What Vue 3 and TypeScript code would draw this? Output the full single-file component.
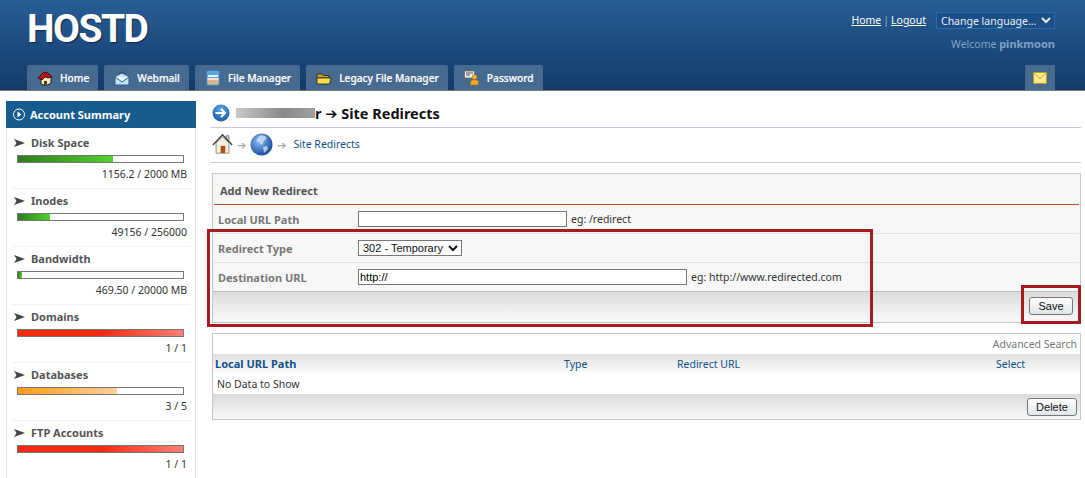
<script setup lang="ts">
interface Stat { name: string; pct: number; value: string; kind: string }
const stats: Stat[] = [
  { name: 'Disk Space', pct: 57.8, value: '1156.2 / 2000 MB', kind: 'green' },
  { name: 'Inodes', pct: 19.2, value: '49156 / 256000', kind: 'green' },
  { name: 'Bandwidth', pct: 2.3, value: '469.50 / 20000 MB', kind: 'green' },
  { name: 'Domains', pct: 100, value: '1 / 1', kind: 'red' },
  { name: 'Databases', pct: 60, value: '3 / 5', kind: 'orange' },
  { name: 'FTP Accounts', pct: 100, value: '1 / 1', kind: 'red' },
]
const tabs = [
  { name: 'Home', icon: 'home' },
  { name: 'Webmail', icon: 'mail' },
  { name: 'File Manager', icon: 'files' },
  { name: 'Legacy File Manager', icon: 'folder' },
  { name: 'Password', icon: 'pass' },
]
</script>

<template>
  <div class="page">
    <header class="top">
      <div class="logo">HOSTD</div>
      <div class="account">
        <div class="links">
          <a>Home</a><span class="sep">|</span><a>Logout</a>
          <select class="lang"><option>Change language...</option></select>
        </div>
        <div class="welcome">Welcome <b>pinkmoon</b></div>
      </div>
      <nav class="tabs">
        <a v-for="t in tabs" :key="t.name" class="tab">
          <svg class="tabicon" viewBox="0 0 16 16">
            <template v-if="t.icon === 'home'">
              <path d="M4 8v6l5 2 5-3V7L9 4z" fill="#f2e9c4" stroke="#222" stroke-width="1"/>
              <path d="M1 8l6-6 4 1 4 4-4 1-3-1-3 3z" fill="#b3151c" stroke="#300" stroke-width=".8"/>
              <path d="M7 11h3v4H7z" fill="#5a3a12"/>
            </template>
            <template v-else-if="t.icon === 'mail'">
              <path d="M5 6V3.2Q8 .8 11 3.2V6" fill="none" stroke="#445" stroke-width="1"/>
              <path d="M1 6.5L8 3l7 3.500V15H1z" fill="#bfe3f7" stroke="#2c5f88"/>
              <path d="M1 7l7 5 7-5" fill="#eaf6fd" stroke="#2c5f88"/>
            </template>
            <template v-else-if="t.icon === 'files'">
              <rect x="1.500" y="0.500" width="13" height="15" rx="1.500" fill="#5ea6dc" stroke="#3c7bb0" stroke-width=".8"/>
              <rect x="3" y="5" width="10" height="2" fill="#e8f0f6"/>
              <rect x="2.500" y="8" width="11" height="6.500" fill="#d8b48c"/>
              <rect x="2.500" y="8" width="11" height="2" fill="#efe3d2"/>
            </template>
            <template v-else-if="t.icon === 'folder'">
              <path d="M1 4h5l1.500 1.500H13V8H1z" fill="#c9a21c" stroke="#222" stroke-width=".8"/>
              <path d="M1 8h14l-1.500 6H1z" fill="#f8dc4a" stroke="#222" stroke-width=".8"/>
            </template>
            <template v-else>
              <rect x="0.500" y="1" width="10" height="7" fill="#f4f4f4" stroke="#666" stroke-width=".8"/>
              <path d="M2 3h7M2 5h4" stroke="#444" stroke-width="1"/>
              <circle cx="10.500" cy="7" r="2.500" fill="#f3b43a" stroke="#a06c10" stroke-width=".6"/>
              <path d="M6.500 15v-3q0-2 2-2h4q2 0 2 2v3z" fill="#f3a92b" stroke="#a06c10" stroke-width=".6"/>
            </template>
          </svg>
          <span>{{ t.name }}</span>
        </a>
        <a class="tab mailtab">
          <svg width="14" height="12" viewBox="0 0 14 12">
            <rect x="0.500" y="0.500" width="13" height="11" fill="#ffe98a" stroke="#b59a2c"/>
            <path d="M1 1l6 5.500L13 1" fill="none" stroke="#c7a93a"/>
          </svg>
        </a>
      </nav>
    </header>

    <div class="body">
      <aside class="side">
        <h2 class="sidehead">
          <svg width="16" height="16" viewBox="0 0 16 16">
            <circle cx="7" cy="7.500" r="5.500" fill="none" stroke="#fff" stroke-width="1"/>
            <path d="M5.500 4.500l4 3-4 3z" fill="#fff"/>
          </svg>
          Account Summary
        </h2>
        <div class="stats">
          <div v-for="s in stats" :key="s.name" class="stat">
            <div class="statname">
              <svg width="11" height="8" viewBox="0 0 11 8"><path d="M0 0l11 4-11 4 2.500-4z" fill="#444"/></svg>
              {{ s.name }}
            </div>
            <div class="bar"><div class="fill" :class="s.kind" :style="{ width: s.pct + '%' }"></div></div>
            <div class="val">{{ s.value }}</div>
          </div>
        </div>
      </aside>

      <main class="main">
        <h1 class="title">
          <svg width="18" height="18" viewBox="0 0 18 18">
            <defs><radialGradient id="arrowball" cx=".5" cy=".3" r=".8"><stop offset="0" stop-color="#5fa9e6"/><stop offset="1" stop-color="#0d4f9c"/></radialGradient></defs>
            <circle cx="9" cy="9" r="8.500" fill="url(#arrowball)"/>
            <path d="M3.500 9h9M9 5l4 4-4 4" fill="none" stroke="#fff" stroke-width="2"/>
          </svg>
          <span class="redact"></span>
          <span class="titletext">r ➔ Site Redirects</span>
        </h1>
        <div class="crumbs">
          <svg width="21" height="22" viewBox="0 0 22 24">
            <path d="M15 3h3v6h-3z" fill="#ddd" stroke="#555" stroke-width=".8"/>
            <path d="M4 11v11h14V11l-7-7z" fill="#f6f0e2" stroke="#888"/>
            <path d="M0.500 13L11 2l10.500 11" fill="none" stroke="#444" stroke-width="1.500"/>
            <rect x="9" y="14" width="5" height="8" fill="#a9521c"/>
          </svg>
          <span class="carr">➔</span>
          <svg width="23" height="23" viewBox="0 0 23 23">
            <defs><radialGradient id="globe" cx=".4" cy=".35" r=".7"><stop offset="0" stop-color="#8fc0f0"/><stop offset="1" stop-color="#12459c"/></radialGradient></defs>
            <circle cx="11.500" cy="11.500" r="11" fill="url(#globe)"/>
            <path d="M9 3q5-2 8 2l-3 3-2 4-3-3-3-1zM13 14l4-1 1 3-4 4z" fill="#d6e6f6" opacity=".75"/>
          </svg>
          <span class="carr">➔</span>
          <a class="crumblink">Site Redirects</a>
        </div>

        <section class="box form">
          <h3 class="formhead">Add New Redirect</h3>
          <div class="row first">
            <label>Local URL Path</label>
            <input class="short" type="text" />
            <span class="eg">eg: /redirect</span>
          </div>
          <div class="row">
            <label>Redirect Type</label>
            <select class="rtype"><option>302 - Temporary</option></select>
          </div>
          <div class="row">
            <label>Destination URL</label>
            <input class="long" type="text" value="http://" />
            <span class="eg">eg: http://www.redirected.com</span>
          </div>
          <div class="foot savefoot"><button class="btn save">Save</button></div>
        </section>

        <section class="box list">
          <div class="adv">Advanced Search</div>
          <div class="thead">
            <span class="c1">Local URL Path</span>
            <span class="c2">Type</span>
            <span class="c3">Redirect URL</span>
            <span class="c4">Select</span>
          </div>
          <div class="empty">No Data to Show</div>
          <div class="foot delfoot"><button class="btn del">Delete</button></div>
        </section>

        <div class="mark mark1"></div>
        <div class="mark mark2"></div>
      </main>
    </div>
  </div>
</template>

<style>
html, body { margin: 0; background: #fff; overflow: hidden; }
</style>

<style scoped>
.page { width: 1085px; height: 478px; overflow: hidden; font-family: "Noto Sans", "DejaVu Sans", sans-serif; font-size: 10.500px; color: #333; }
.top { position: relative; height: 90px; background: linear-gradient(#285d96, #123a68); border-bottom: 1px solid #777; display: flex; flex-direction: column; }
.logo { position: absolute; left: 27px; top: 7px; font-family: Roboto, sans-serif; font-weight: 700; font-size: 39px; letter-spacing: -1.500px; line-height: 44px; color: #fff; text-shadow: 1px 1px 1px #0b2a4c; }
.account { position: absolute; right: 30px; top: 12px; text-align: right; }
.links { display: flex; align-items: center; justify-content: flex-end; height: 16px; font-size: 10.500px; color: #fff; }
.links a { color: #fff; text-decoration: underline; }
.sep { margin: 0 2px; color: #9bb4cf; }
.lang { width: 119px; height: 17px; margin-left: 10px; background: #1c4f88; color: #e6eef6; border: 1px solid #2b69ad; font: 10.500px "Noto Sans", sans-serif; padding: 0; }
.welcome { margin-top: 8px; color: #7fa3c6; font-size: 10.500px; }
.welcome b { font-size: 11px; }
.tabs { display: flex; gap: 6px; margin-top: auto; padding-left: 27px; height: 25px; }
.tab { display: flex; align-items: center; height: 25px; background: #466a90; color: #fff; font-size: 10.200px; font-weight: 500; border-radius: 2px 2px 0 0; padding: 0 9px 0 10px; -webkit-text-stroke: .2px #fff; }
.tab span { white-space: nowrap; }
.tabicon { width: 16px; height: 16px; margin-right: 7px; flex: none; }
.mailtab { position: absolute; right: 30px; bottom: 0; width: 30px; box-sizing: border-box; justify-content: center; padding: 0; border-radius: 0; }

.body { display: flex; align-items: flex-start; padding: 10px 4px 0 6px; }
.side { width: 190px; height: 385px; box-sizing: border-box; flex: none; border: 1px solid #e4e4e4; border-top: 0; margin-right: 15px; }
.sidehead { margin: 0 -1px; height: 27px; background: #165c8f; color: #fff; font-size: 11px; font-weight: 700; display: flex; align-items: center; gap: 2px; padding-left: 6px; }
.stats { padding-top: 3px; }
.stat { height: 57px; margin: 0 5px; border-bottom: 1px solid #f1f1f1; box-sizing: content-box; position: relative; }
.stat:last-child { border-bottom: 0; }
.statname { height: 15px; padding-top: 4px; padding-left: 2px; font-size: 11px; font-weight: 700; color: #555; display: flex; align-items: center; gap: 6px; line-height: 15px; }
.bar { margin: 5px 0 0 5px; width: 165px; height: 6px; border: 1px solid #777; background: #fff; }
.fill { height: 100%; }
.green { background: linear-gradient(90deg, #2e7d1c, #4ed42a); }
.red { background: linear-gradient(90deg, #f12a10 50%, #fb8075); }
.orange { background: linear-gradient(90deg, #ff9a12, #ffd29c); }
.val { margin-top: 4px; text-align: right; padding-right: 3px; line-height: 15px; color: #333; }

.main { position: relative; flex: 1; min-width: 0; }
.title { margin: 0; height: 24px; padding: 0 0 2px 1px; display: flex; align-items: center; gap: 6px; font-size: 14.500px; font-weight: 700; color: #111; border-bottom: 1px solid #c9c9e4; box-sizing: content-box; }
.redact { width: 79px; height: 10px; margin-right: -6px; background: linear-gradient(90deg, #c8c8c8, #8a8a8a 60%, #a0a0a0); filter: blur(.6px); }
.crumbs { height: 32px; padding: 0 0 2px 1px; display: flex; align-items: center; gap: 4px; border-bottom: 1px solid #c9c9e4; }
.carr { color: #aaa; font-size: 11px; }
.crumblink { color: #12508a; margin-left: 3px; }
.box { border: 1px solid #c6c6c6; box-sizing: border-box; margin-left: 1px; }
.form { margin-top: 10px; height: 150px; background: #f7f7f7; padding: 0 1px; }
.formhead { margin: 0; height: 30px; line-height: 33px; box-sizing: content-box; padding-left: 6px; font-size: 11px; font-weight: 700; color: #555; border-bottom: 1px solid #b5542a; }
.row { display: flex; align-items: center; height: 28px; border-bottom: 1px solid #e2e2e2; padding-left: 4px; }
.row label { width: 140px; font-size: 11px; font-weight: 700; color: #777; flex: none; }
.row input { box-sizing: border-box; height: 16px; border: 1px solid #777; background: #fff; padding: 0 1px; font: 11px "Liberation Sans", sans-serif; color: #000; border-radius: 0; outline: 0; }
.short { width: 209px; }
.long { width: 329px; }
.eg { margin-left: 4px; color: #333; }
.rtype { box-sizing: border-box; width: 104px; height: 16px; font: 11px "Liberation Sans", sans-serif; color: #111; background: #fff; border: 1px solid #777; padding: 0; border-radius: 0; }
.foot { display: flex; justify-content: flex-end; align-items: center; background: linear-gradient(#dcdcdc, #f8f8f8); }
.savefoot { height: 30px; border-top: 1px solid #bdbdbd; margin: -1px -1px 0; padding: 0 7px 2px 0; box-sizing: border-box; }
.btn { box-sizing: border-box; height: 18px; border: 1px solid #777; border-radius: 3px; background: linear-gradient(#fff, #dfe6ea); color: #111; font: 11px "Liberation Sans", sans-serif; padding: 0; }
.save { width: 44px; }
.del { width: 50px; }
.list { margin-top: 10px; height: 87px; background: #fff; }
.adv { height: 20px; line-height: 21px; text-align: right; padding-right: 3px; color: #777; }
.thead { position: relative; height: 19px; background: linear-gradient(#e2e2e2, #fafafa); line-height: 20px; color: #12508a; }
.thead span { position: absolute; top: 0; }
.c1 { left: 2px; font-size: 11px; font-weight: 700; }
.c2 { left: 351px; }
.c3 { left: 464px; }
.c4 { left: 783px; }
.empty { height: 21px; line-height: 23px; padding-left: 4px; color: #333; }
.delfoot { height: 25px; padding-right: 3px; }
.mark { position: absolute; border: 3px solid #a61b22; box-sizing: border-box; pointer-events: none; }
.mark1 { left: -4px; top: 128px; width: 666px; height: 98px; }
.mark2 { left: 810px; top: 184px; width: 60px; height: 39px; }
</style>
